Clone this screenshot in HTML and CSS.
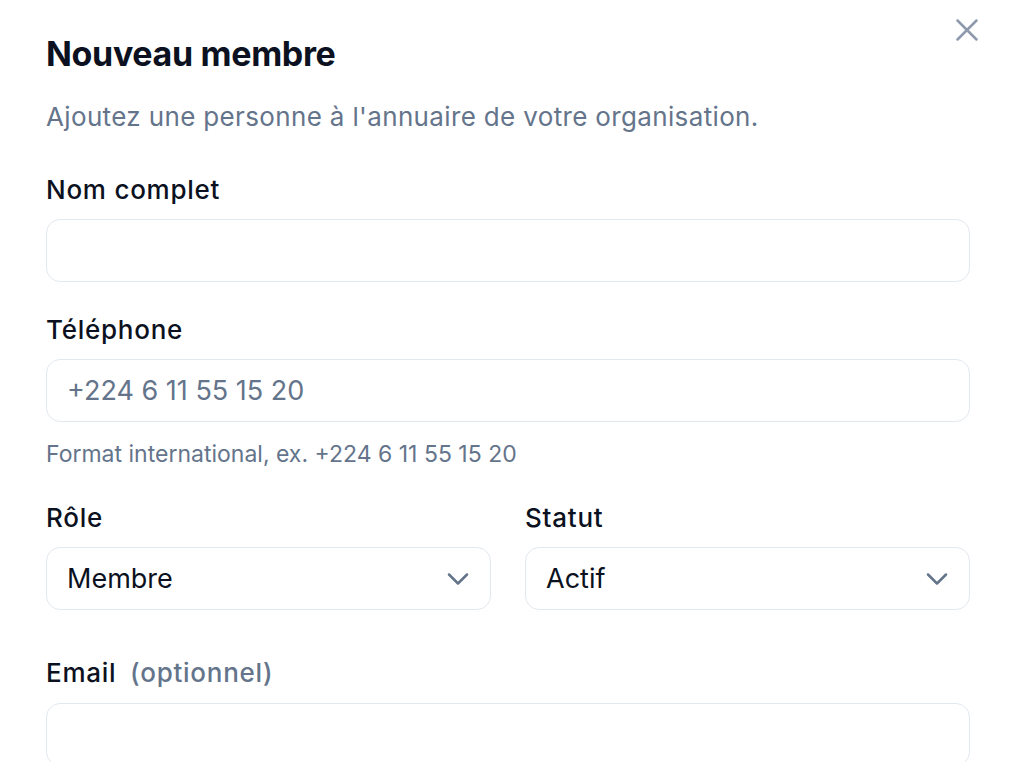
FILE: index.html
```html
<!DOCTYPE html>
<html lang="fr">
<head>
<meta charset="utf-8">
<title>Nouveau membre</title>
<link rel="stylesheet" href="styles.css">
</head>
<body>
<div class="dialog">
  <button class="close" type="button" aria-label="Fermer">
    <svg viewBox="0 0 24 24" width="24" height="24" fill="none" stroke="currentColor" stroke-width="1.6" stroke-linecap="round"><path d="M18 6 6 18M6 6l12 12"/></svg>
  </button>
  <header class="head">
    <h1 class="title">Nouveau membre</h1>
    <p class="subtitle">Ajoutez une personne à l'annuaire de votre organisation.</p>
  </header>
  <form class="form">
    <div class="field">
      <label class="label">Nom complet</label>
      <div class="control"></div>
    </div>
    <div class="field">
      <label class="label">Téléphone</label>
      <div class="control"><span class="placeholder">+224 6 11 55 15 20</span></div>
      <p class="hint">Format international, ex. +224 6 11 55 15 20</p>
    </div>
    <div class="row">
      <div class="field">
        <label class="label">Rôle</label>
        <div class="control select"><span class="value">Membre</span>
          <svg class="chev" viewBox="0 0 24 24" width="30" height="30" fill="none" stroke="currentColor" stroke-width="2" stroke-linecap="round" stroke-linejoin="round"><path d="m6 9 6 6 6-6"/></svg>
        </div>
      </div>
      <div class="field">
        <label class="label">Statut</label>
        <div class="control select"><span class="value">Actif</span>
          <svg class="chev" viewBox="0 0 24 24" width="30" height="30" fill="none" stroke="currentColor" stroke-width="2" stroke-linecap="round" stroke-linejoin="round"><path d="m6 9 6 6 6-6"/></svg>
        </div>
      </div>
    </div>
    <div class="field email">
      <label class="label">Email <span class="opt">(optionnel)</span></label>
      <div class="control"></div>
    </div>
  </form>
</div>
</body>
</html>
```
FILE: styles.css
```css
html, body {
  margin: 0;
  padding: 0;
  background: #ffffff;
  overflow: hidden;
}
body {
  font-family: "Inter", "Liberation Sans", sans-serif;
  color: #0b1120;
}
.dialog {
  position: relative;
  padding: 34px 46px 0 46px;
  height: 762px;
  box-sizing: border-box;
}
.close {
  position: absolute;
  top: 11px;
  left: 948px;
  width: 38px;
  height: 38px;
  padding: 0;
  border: 0;
  background: transparent;
  color: #8e99ad;
  display: flex;
  align-items: center;
  justify-content: center;
}
.close svg {
  width: 38px;
  height: 38px;
}
.title {
  margin: 0;
  font-size: 34px;
  line-height: 40px;
  font-weight: 700;
  color: #0b1120;
  letter-spacing: -0.01em;
}
.subtitle {
  margin: 25px 0 0 0;
  font-size: 26px;
  line-height: 36px;
  letter-spacing: 0.35px;
  color: #64748b;
}
.form {
  display: flex;
  flex-direction: column;
  margin-top: 37px;
}
.field {
  display: flex;
  flex-direction: column;
  min-width: 0;
}
.form > .field + .field,
.form > .field + .row {
  margin-top: 30px;
}
.form > .row + .field {
  margin-top: 45px;
}
.label {
  font-size: 26px;
  line-height: 36px;
  font-weight: 500;
  letter-spacing: 0.75px;
  color: #0b1120;
  margin-bottom: 11px;
}
.opt {
  color: #64748b;
  margin-left: 6px;
}
.control {
  height: 63px;
  box-sizing: border-box;
  border: 1.5px solid #e2e8f0;
  border-radius: 14px;
  display: flex;
  align-items: center;
  padding: 0 20px;
  font-size: 27px;
}
.placeholder {
  color: #64748b;
}
.value {
  color: #0b1120;
  flex: 1;
}
.chev {
  color: #64748b;
  width: 36px;
  height: 36px;
  margin-right: -6px;
  stroke-width: 1.7;
}
.hint {
  margin: 16px 0 0 0;
  font-size: 23px;
  line-height: 32px;
  color: #64748b;
}
.row {
  display: grid;
  grid-template-columns: 1fr 1fr;
  column-gap: 34px;
}
.email .label {
  margin-bottom: 12px;
}
```
